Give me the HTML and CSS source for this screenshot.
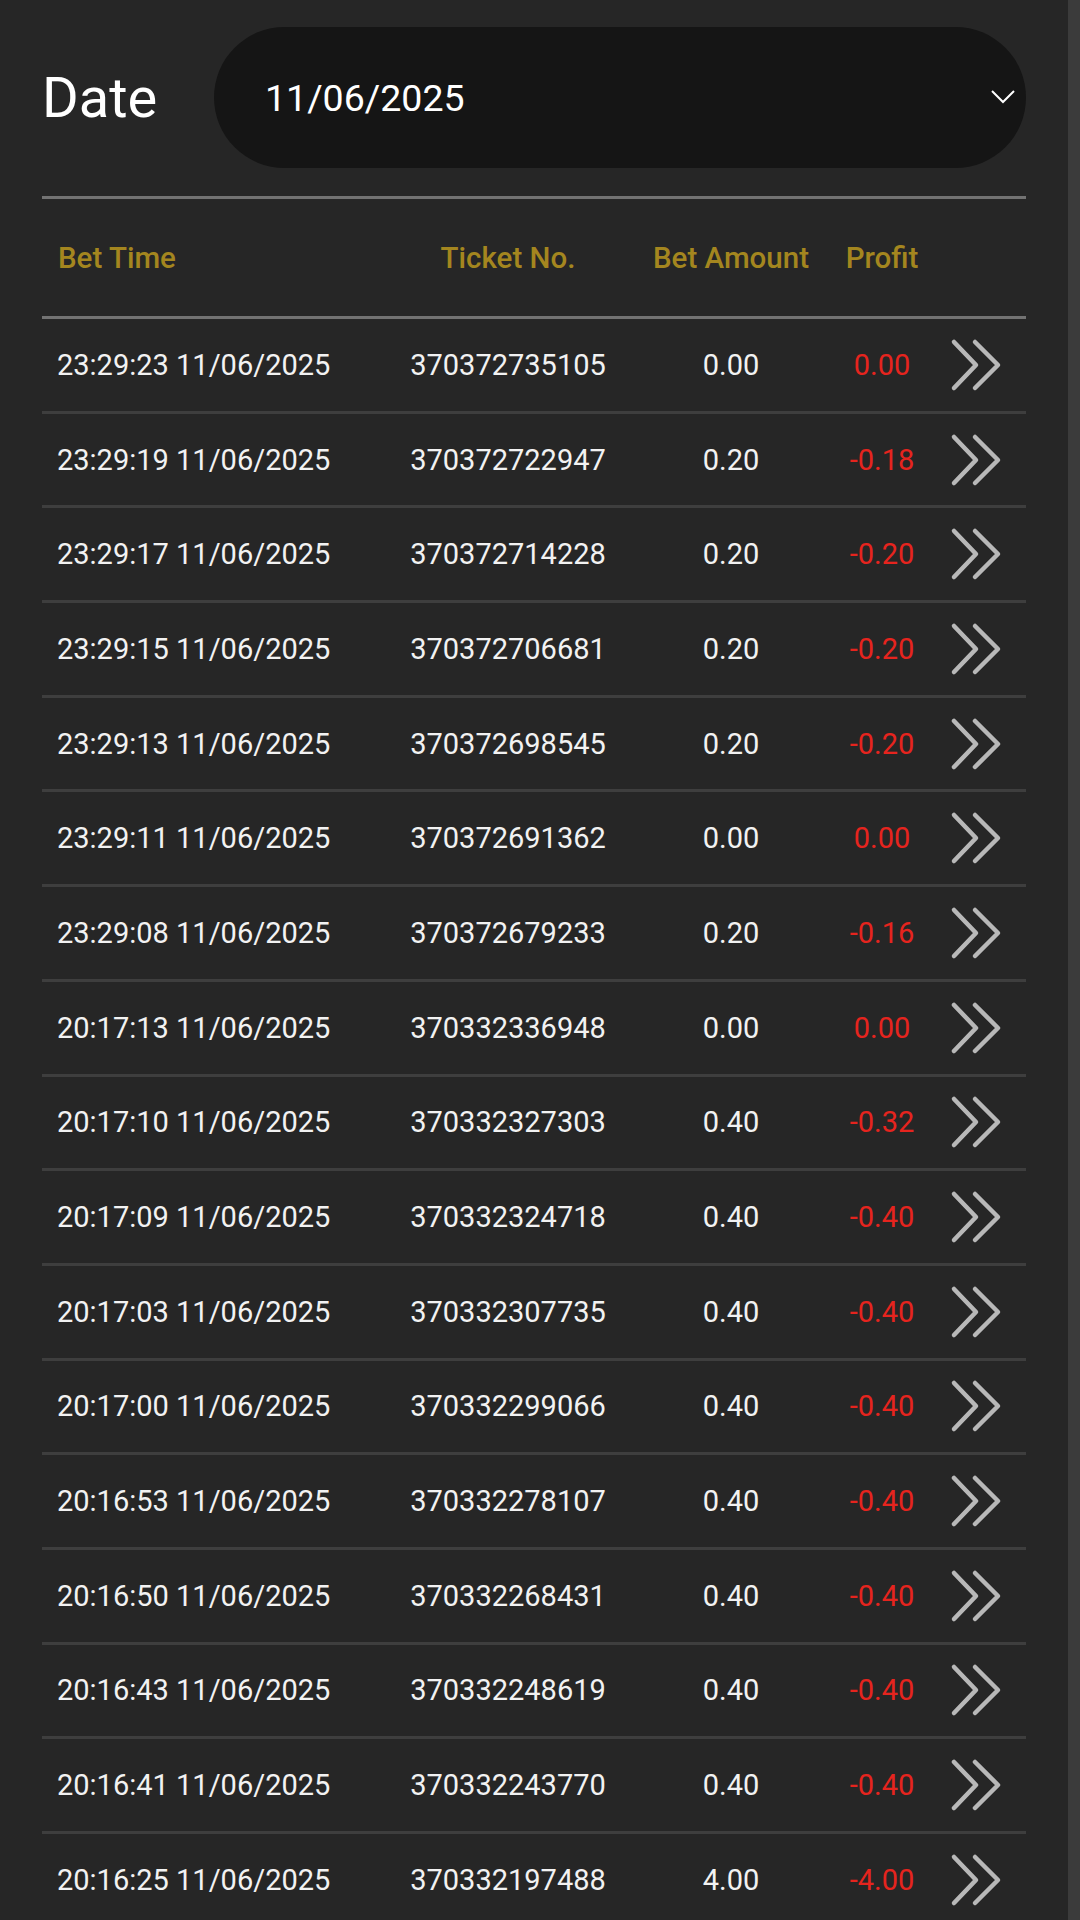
FILE: index.html
```html
<!DOCTYPE html>
<html lang="en">
<head>
    <meta charset="UTF-8">
    <meta name="viewport" content="width=device-width, initial-scale=1.0">
    <title>Bet History</title>
    <link rel="stylesheet" href="styles.css">
</head>
<body>
<div class="page">
    <div class="content">
        <div class="date-row">
            <div class="date-label">Date</div>
            <div class="date-select">
                <span>11/06/2025</span>
                <svg class="caret" viewBox="0 0 24 14" width="24" height="14">
                    <polyline points="1,1 12,12 23,1" fill="none" stroke="#fff" stroke-width="2"/>
                </svg>
            </div>
        </div>

        <div class="table-head">
            <div class="col-time">Bet Time</div>
            <div class="col-center">Ticket No.</div>
            <div class="col-center">Bet Amount</div>
            <div class="col-center">Profit</div>
            <div></div>
        </div>

        <div id="rows"></div>
    </div>
    <div class="scroll-track"></div>
</div>

<script>
    // Список ставок
    const bets = [
        ['23:29:23 11/06/2025', '370372735105', '0.00', '0.00'],
        ['23:29:19 11/06/2025', '370372722947', '0.20', '-0.18'],
        ['23:29:17 11/06/2025', '370372714228', '0.20', '-0.20'],
        ['23:29:15 11/06/2025', '370372706681', '0.20', '-0.20'],
        ['23:29:13 11/06/2025', '370372698545', '0.20', '-0.20'],
        ['23:29:11 11/06/2025', '370372691362', '0.00', '0.00'],
        ['23:29:08 11/06/2025', '370372679233', '0.20', '-0.16'],
        ['20:17:13 11/06/2025', '370332336948', '0.00', '0.00'],
        ['20:17:10 11/06/2025', '370332327303', '0.40', '-0.32'],
        ['20:17:09 11/06/2025', '370332324718', '0.40', '-0.40'],
        ['20:17:03 11/06/2025', '370332307735', '0.40', '-0.40'],
        ['20:17:00 11/06/2025', '370332299066', '0.40', '-0.40'],
        ['20:16:53 11/06/2025', '370332278107', '0.40', '-0.40'],
        ['20:16:50 11/06/2025', '370332268431', '0.40', '-0.40'],
        ['20:16:43 11/06/2025', '370332248619', '0.40', '-0.40'],
        ['20:16:41 11/06/2025', '370332243770', '0.40', '-0.40'],
        ['20:16:25 11/06/2025', '370332197488', '4.00', '-4.00']
    ];

    const arrow = '<svg class="more" viewBox="0 0 52 54" width="52" height="54">' +
        '<polyline points="4,4 26,27 4,50" />' +
        '<polyline points="25,4 48,27 25,50" /></svg>';

    const rows = document.getElementById('rows');
    rows.innerHTML = bets.map(b => `
        <div class="bet-row">
            <div class="col-time">${b[0]}</div>
            <div class="col-center">${b[1]}</div>
            <div class="col-center">${b[2]}</div>
            <div class="col-center profit">${b[3]}</div>
            <div class="col-more">${arrow}</div>
        </div>`).join('');
</script>
</body>
</html>
```

FILE: styles.css
```css
* {
    margin: 0;
    padding: 0;
    box-sizing: border-box;
}
body {
    font-family: Roboto, "Liberation Sans", sans-serif;
    background-color: #262626;
    color: #f2f2f2;
    height: 1920px;
    overflow: hidden;
}
.page {
    display: flex;
    min-height: 1920px;
}
.content {
    flex: 1;
    padding: 27px 42px 0 42px;
}
.scroll-track {
    width: 12px;
    background-color: #3b3b3b;
}
.date-row {
    display: flex;
    align-items: center;
    height: 141px;
}
.date-label {
    width: 172px;
    font-size: 56px;
    color: #fff;
}
.date-select {
    flex: 1;
    height: 141px;
    border-radius: 71px;
    background-color: #151515;
    display: flex;
    align-items: center;
    justify-content: space-between;
    padding: 0 11px 0 51px;
    font-size: 37.5px;
    color: #fff;
}
.caret {
    margin-bottom: 1px;
}
.table-head,
.bet-row {
    display: grid;
    grid-template-columns: 356px 220px 226px 76px 1fr;
    align-items: center;
}
.table-head {
    margin-top: 28px;
    height: 123px;
    border-top: 3px solid #727272;
    border-bottom: 3px solid #727272;
    color: #a4861f;
    font-size: 29.5px;
    font-weight: 500;
}
.table-head .col-time {
    padding-left: 16px;
}
.bet-row {
    height: 94.7px;
    border-bottom: 3px solid #3e3e3e;
    font-size: 29px;
}
.bet-row .col-time {
    padding-left: 15px;
}
.col-center {
    text-align: center;
    white-space: nowrap;
}
.profit {
    color: #e6241e;
}
.col-more {
    display: flex;
    justify-content: flex-end;
    padding-right: 24px;
}
.more polyline {
    fill: none;
    stroke: #b8b8b8;
    stroke-width: 4.5;
    stroke-linecap: round;
    stroke-linejoin: round;
}
```
